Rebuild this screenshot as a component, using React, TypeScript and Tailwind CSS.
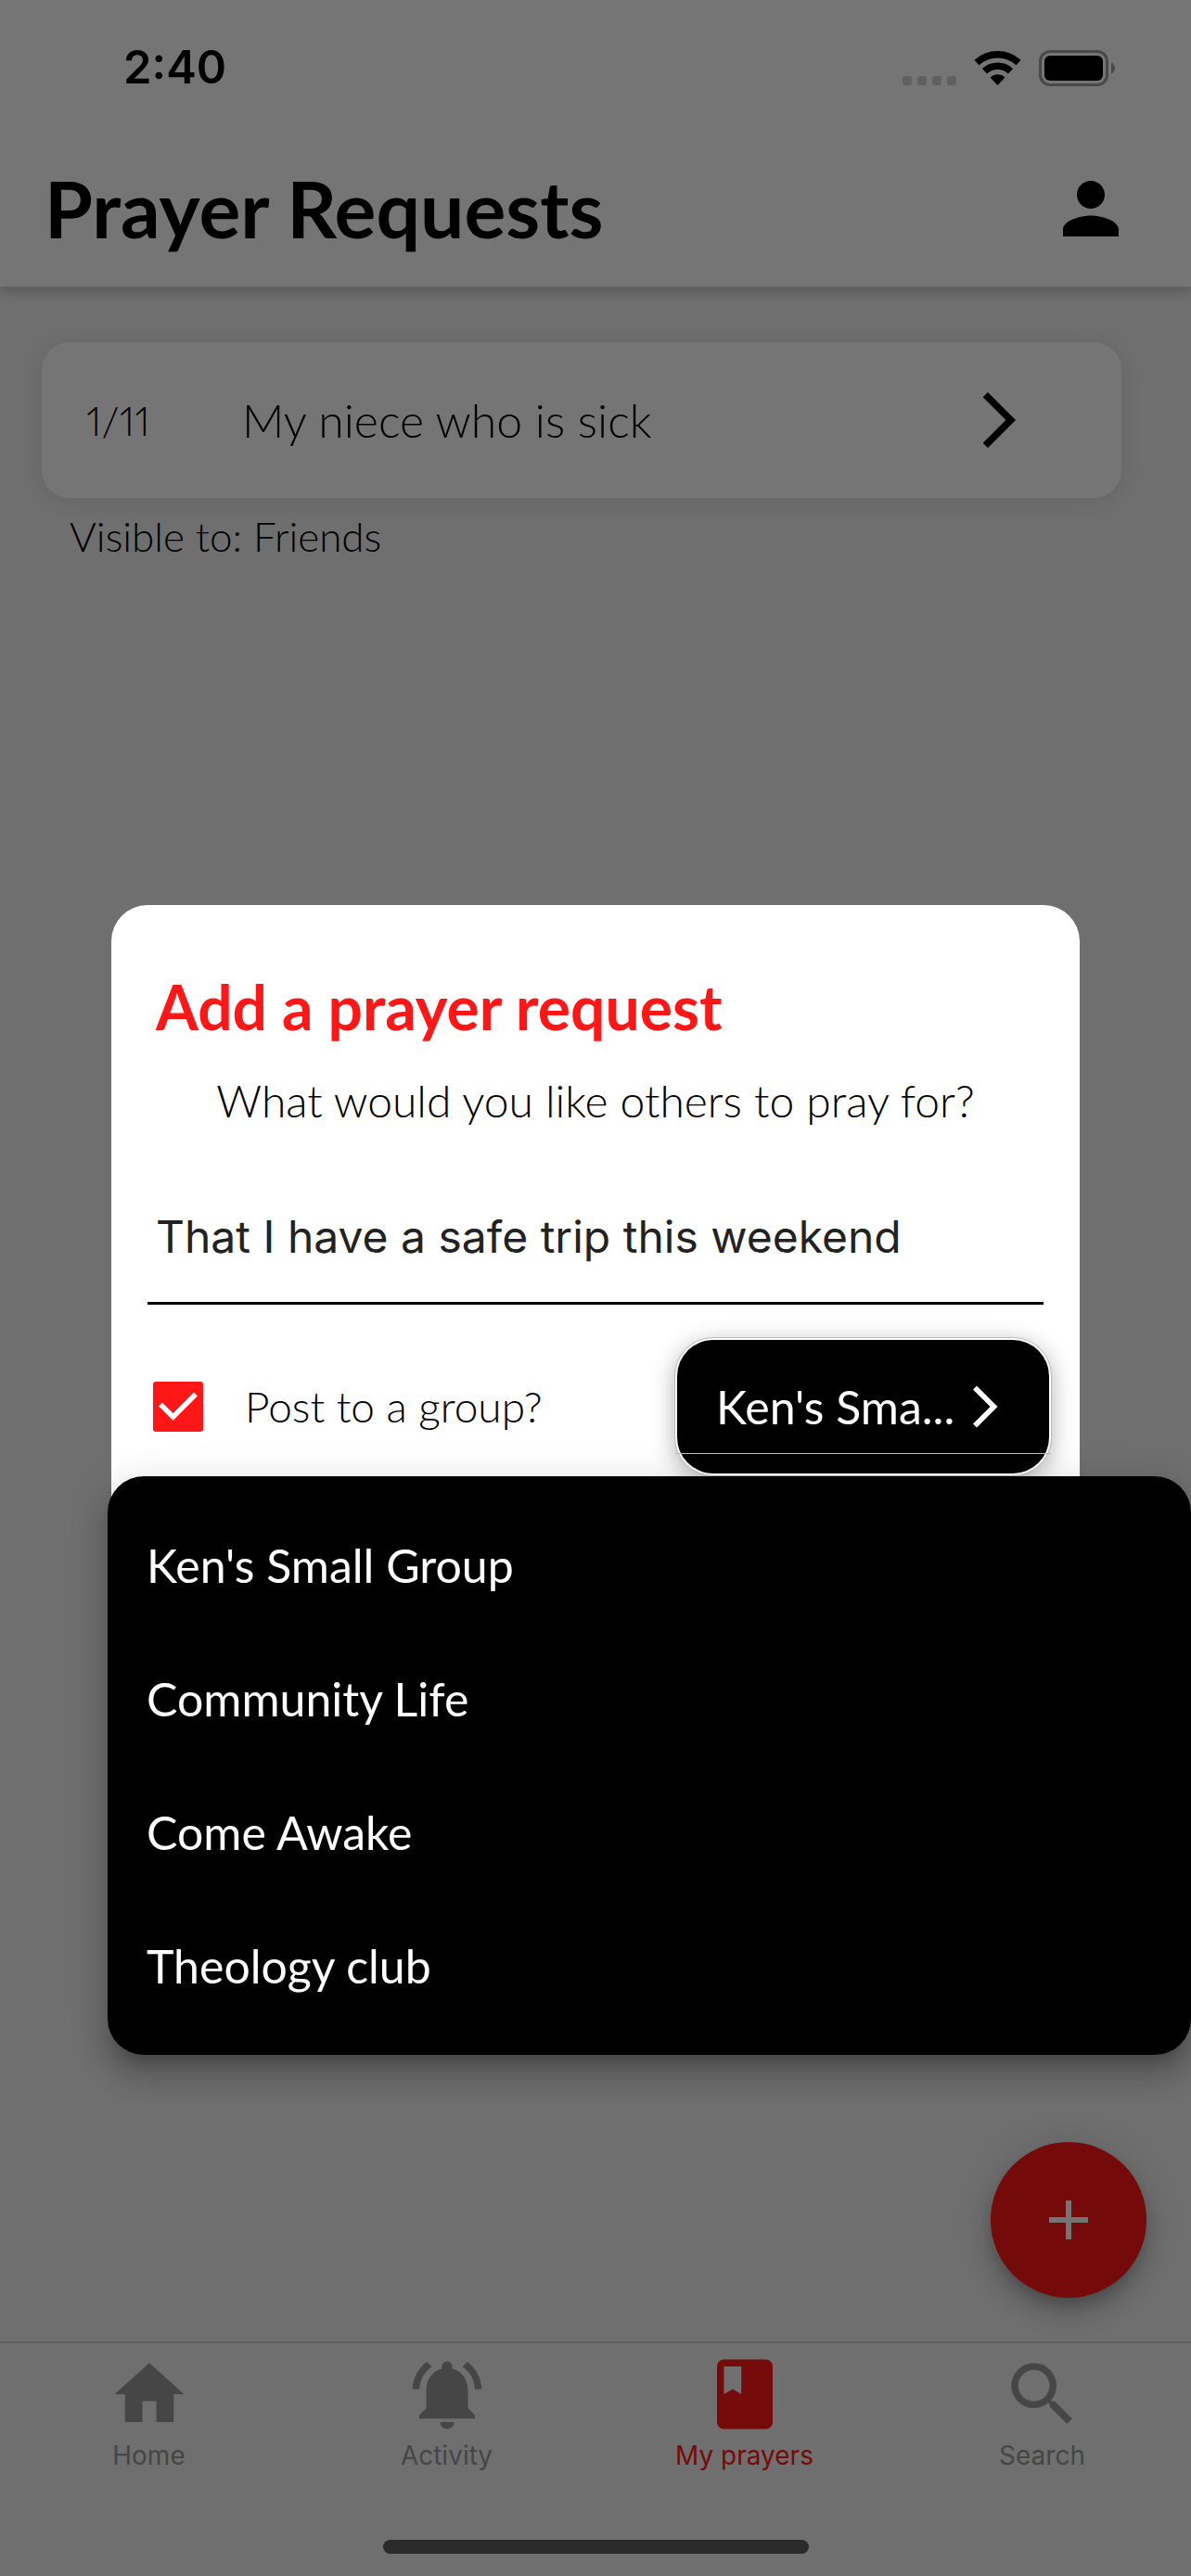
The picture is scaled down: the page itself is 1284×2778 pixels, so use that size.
import { useState } from 'react';
import {
  MdAdd,
  MdArrowForwardIos,
  MdBook,
  MdHome,
  MdNotificationsActive,
  MdPerson,
  MdSearch,
} from 'react-icons/md';

const groups = ["Ken's Small Group", 'Community Life', 'Come Awake', 'Theology club'];

const tabs = [
  { label: 'Home', icon: MdHome, active: false },
  { label: 'Activity', icon: MdNotificationsActive, active: false },
  { label: 'My prayers', icon: MdBook, active: true },
  { label: 'Search', icon: MdSearch, active: false },
];

const StatusBar = () => (
  <div className="flex items-center justify-between pt-[42px] pl-[133px] pr-[82px]">
    <span className="font-['Inter',sans-serif] text-[49px] leading-[62px] font-semibold">2:40</span>
    <svg width="229" height="39" viewBox="0 0 229 39" aria-hidden="true">
      <g fill="#d1d1d1">
        <rect x="0" y="28" width="10" height="10" rx="3" />
        <rect x="16" y="28" width="10" height="10" rx="3" />
        <rect x="32" y="28" width="10" height="10" rx="3" />
        <rect x="48" y="28" width="10" height="10" rx="3" />
      </g>
      <g fill="none" stroke="#000" strokeWidth="7.6">
        <path d="M80 13.5a33.3 33.3 0 0 1 45 0" />
        <path d="M88.5 22.7a20.7 20.7 0 0 1 28 0" />
      </g>
      <path d="M102.5 38 94.5 29.4a12 12 0 0 1 16 0z" fill="#000" />
      <rect x="148.5" y="1.5" width="72" height="36" rx="10.5" fill="none" stroke="#9f9f9f" strokeWidth="3" />
      <rect x="153" y="6" width="63" height="27" rx="6" fill="#000" />
      <path d="M225 13.5c2.5 1 4 3.5 4 6s-1.5 5-4 6z" fill="#9f9f9f" />
    </svg>
  </div>
);

const Header = () => (
  <header className="relative bg-white shadow-[0_6px_12px_rgba(0,0,0,0.2)]">
    <StatusBar />
    <div className="flex items-center justify-between pt-[70px] pb-[33px] pl-12 pr-[63px]">
      <h1 className="text-[84px] leading-[102px] font-bold">Prayer Requests</h1>
      <button type="button" aria-label="Profile">
        <MdPerson size={90} />
      </button>
    </div>
  </header>
);

const BottomNav = () => (
  <nav className="border-t-2 border-[#d1d1d1]">
    <div className="flex pt-[10px]">
      {tabs.map(({ label, icon: Icon, active }) => (
        <a
          key={label}
          href="#"
          className={`flex flex-1 flex-col items-center font-['Inter',sans-serif] text-[28px] leading-[42px] ${active ? 'text-[#ff1616]' : 'text-[#999999]'}`}
        >
          <Icon size={90} />
          {label}
        </a>
      ))}
    </div>
    <div className="mx-auto mt-[70px] mb-6 h-[15px] w-[459px] rounded-full bg-[#5d5d5d]" />
  </nav>
);

const AddRequestDialog = () => {
  const [text, setText] = useState('That I have a safe trip this weekend');
  const [post, setPost] = useState(true);

  return (
    <div
      role="dialog"
      aria-labelledby="dialog-title"
      className="relative mx-[120px] flex min-h-[826px] flex-1 flex-col rounded-[39px] bg-white"
    >
      <div className="flex flex-col px-[39px] pt-[74px]">
        <h2 id="dialog-title" className="pl-[9px] text-[66px] leading-[72px] font-bold text-[#ff1616]">
          Add a prayer request
        </h2>
        <label htmlFor="request" className="pt-[35px] text-center text-[48px] leading-[60px] font-light">
          What would you like others to pray for?
        </label>
        <input
          id="request"
          value={text}
          onChange={(e) => setText(e.target.value)}
          className="mt-[45px] h-[145px] border-b-[3px] border-black pl-[9px] font-['Inter',sans-serif] text-[48px] text-[#222222] outline-none"
        />
        <div className="flex items-center justify-between pt-[35px]">
          <div className="flex items-center pl-[6px]">
            <span className="relative flex size-[54px]">
              <input
                id="post"
                type="checkbox"
                checked={post}
                onChange={(e) => setPost(e.target.checked)}
                className="size-[54px] appearance-none rounded-[3px] border-[6px] border-[#ff1616] checked:bg-[#ff1616]"
              />
              {post && (
                <svg viewBox="0 0 54 54" className="pointer-events-none absolute inset-0" fill="none" aria-hidden="true">
                  <path d="M8 24.5 21.5 38 46 13.5" stroke="#fff" strokeWidth="5.5" />
                </svg>
              )}
            </span>
            <label htmlFor="post" className="pl-[45px] text-[46px] leading-[54px] font-light">
              Post to a group?
            </label>
          </div>
          <button
            type="button"
            aria-haspopup="listbox"
            aria-expanded="true"
            className="relative -mr-[9px] flex h-[150px] w-[407px] items-center justify-between rounded-[42px] border border-[#bbbbbb] bg-white p-[2px] shadow-[0_6px_24px_rgba(0,0,0,0.3)]"
          >
            <span className="flex h-full w-full items-center justify-between rounded-[39px] bg-black px-[42px] text-[50px] leading-[60px] text-white">
              Ken's Sma...
              <MdArrowForwardIos size={54} />
            </span>
            <span className="absolute inset-x-0 bottom-[23px] h-px bg-[#bbbbbb]" />
          </button>
        </div>
      </div>

      {/* Group menu, opens out to the right edge of the screen */}
      <ul
        role="listbox"
        aria-label="Group"
        className="absolute top-[616px] -right-[120px] -left-1 rounded-[39px] bg-black py-6 shadow-[0_15px_15px_-9px_rgba(0,0,0,0.2),0_24px_30px_3px_rgba(0,0,0,0.14),0_9px_42px_6px_rgba(0,0,0,0.12)]"
      >
        {groups.map((group) => (
          <li key={group} role="option" aria-selected={group === groups[0]}>
            <button type="button" className="h-[144px] w-full px-[42px] text-left text-[50px] leading-[60px] text-white">
              {group}
            </button>
          </li>
        ))}
      </ul>
    </div>
  );
};

const App = () => {
  return (
    <div className="relative flex min-h-screen flex-col overflow-hidden bg-[#f2f2f2] font-['Lato',sans-serif] text-black">
      <Header />

      <main className="flex flex-1 flex-col pt-[60px] pr-[75px] pl-[45px]">
        <button
          type="button"
          className="flex h-[168px] items-center rounded-[30px] bg-white pr-24 pl-12 text-left shadow-[0_3px_30px_rgba(0,0,0,0.1)]"
        >
          <span className="w-[168px] text-[44px] leading-[54px] font-light proportional-nums">1/11</span>
          <span className="flex-1 text-[50px] leading-[60px] font-light">My niece who is sick</span>
          <MdArrowForwardIos size={72} />
        </button>
        <p className="pt-[14px] pl-[30px] text-[44px] leading-[54px] font-light">Visible to: Friends</p>

        <button
          type="button"
          aria-label="Add prayer request"
          className="mt-auto -mr-[27px] mb-[47px] flex size-[168px] items-center justify-center self-end rounded-full bg-[#ff1616] text-white shadow-[0_9px_15px_-3px_rgba(0,0,0,0.2),0_18px_30px_rgba(0,0,0,0.14),0_3px_54px_rgba(0,0,0,0.12)]"
        >
          <MdAdd size={72} />
        </button>
      </main>

      <BottomNav />

      <div className="absolute inset-0 flex items-center bg-black/54">
        <AddRequestDialog />
      </div>
    </div>
  );
};

export default App;
